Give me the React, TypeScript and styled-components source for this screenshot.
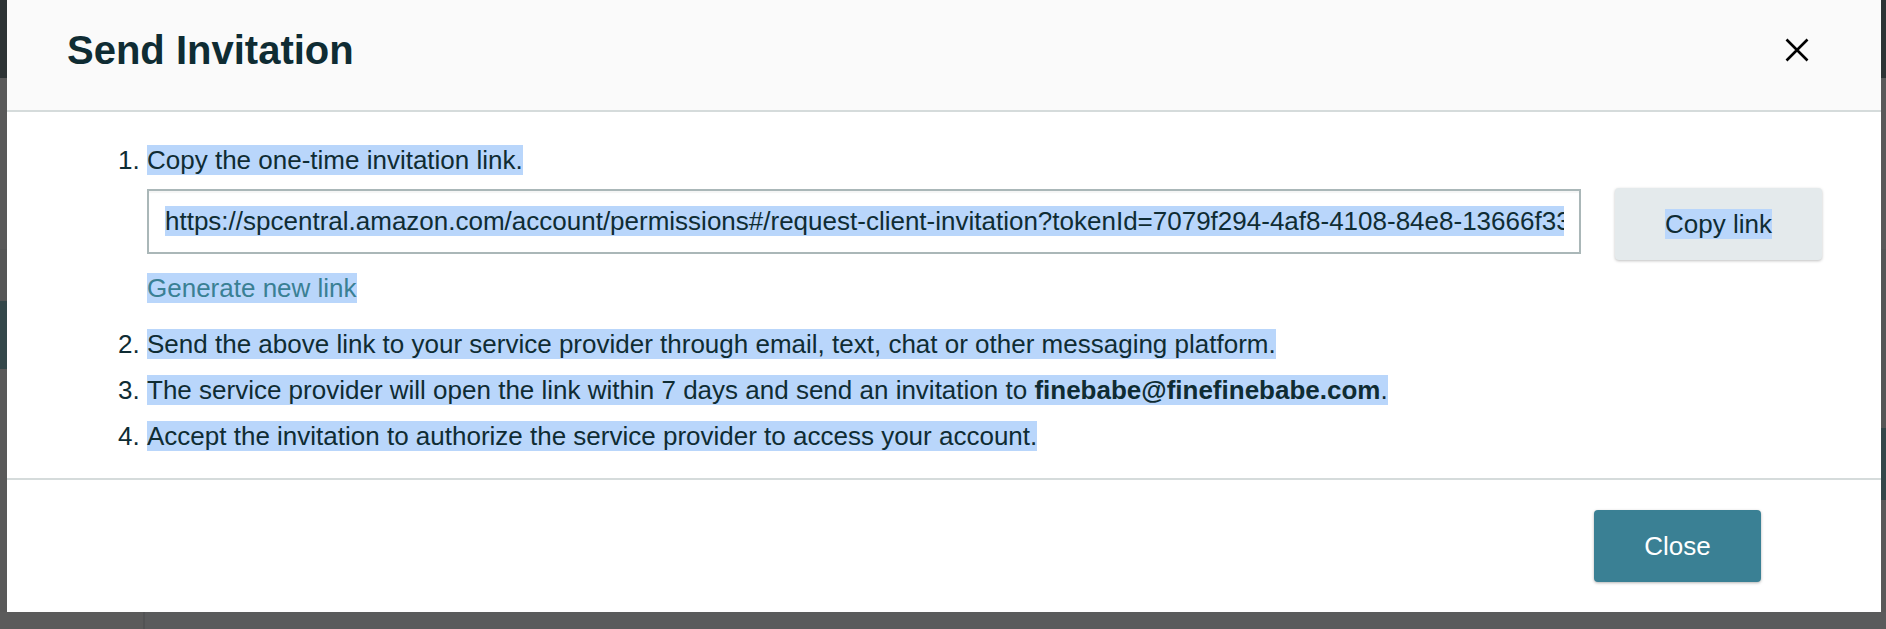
import React from 'react';
import styled, { createGlobalStyle } from 'styled-components';

const colors = {
  ink: '#0f2c33',
  teal: '#3a8094',
  divider: '#d5dbdb',
  selection: '#b9d6fb',
  inputBorder: '#aab7b8',
  secondaryBg: '#e4eaec',
};

const GlobalStyle = createGlobalStyle`
  html, body {
    margin: 0;
    padding: 0;
    background: #5a5b5c;
  }
  body {
    font-family: 'Liberation Sans', Arial, sans-serif;
    color: ${colors.ink};
  }
  * {
    box-sizing: border-box;
  }
`;

const Page = styled.div`
  width: 1886px;
  height: 629px;
  display: flex;
  flex-direction: column;
  overflow: hidden;
`;

const Stage = styled.div`
  display: flex;
  height: 612px;
`;

const Edge = styled.div<{ side: 'left' | 'right' }>`
  width: ${({ side }) => (side === 'left' ? '7px' : '5px')};
  flex-shrink: 0;
  background: ${({ side }) =>
    side === 'left'
      ? 'linear-gradient(#2d3334 0 78px, #595959 78px 249px, #555656 249px 301px, #34474a 301px 369px, #595959 369px)'
      : 'linear-gradient(#2d3334 0 78px, #595959 78px 249px, #555656 249px 428px, #34474a 428px 500px, #595959 500px)'};
`;

const BottomStrip = styled.div`
  flex: 1;
  display: grid;
  grid-template-columns: 145px 1fr;
  background: #5a5b5c;

  & > div:first-child {
    border-right: 2px solid #525354;
    background: #5b5b5b;
  }
`;

const Modal = styled.div`
  flex: 1;
  min-width: 0;
  display: flex;
  flex-direction: column;
  background: #ffffff;
`;

const Header = styled.div`
  height: 112px;
  flex-shrink: 0;
  display: flex;
  align-items: center;
  justify-content: space-between;
  padding: 0 72px 10px 60px;
  background: #fafafa;
  border-bottom: 2px solid ${colors.divider};
`;

const Title = styled.h2`
  margin: 0;
  font-size: 40px;
  font-weight: 700;
  line-height: 1;
  color: ${colors.ink};
`;

const DismissButton = styled.button`
  width: 24px;
  height: 24px;
  padding: 0;
  border: none;
  background: none;
  cursor: pointer;
  display: flex;
`;

const Body = styled.div`
  flex: 1;
  min-width: 0;
  padding: 30px 59px 12px 140px;
  border-bottom: 2px solid ${colors.divider};
`;

const Steps = styled.ol`
  margin: 0;
  padding: 0;
  list-style: decimal outside;
  font-size: 26px;
  line-height: 36px;
`;

const Step = styled.li`
  margin-bottom: 10px;

  &:last-child {
    margin-bottom: 0;
  }
`;

const Selected = styled.span`
  background: ${colors.selection};
`;

const LinkRow = styled.div`
  display: flex;
  align-items: flex-start;
  gap: 34px;
  margin-top: 10px;
`;

const LinkField = styled.div`
  flex: 1;
  min-width: 0;
  height: 65px;
  margin-top: 1px;
  display: flex;
  align-items: center;
  padding: 0 15px 0 16px;
  border: 2px solid ${colors.inputBorder};
  box-shadow: inset 0 2px 1px rgba(0, 0, 0, 0.04);
  background: #ffffff;
`;

const LinkText = styled.div`
  flex: 1;
  min-width: 0;
  overflow: hidden;
  white-space: nowrap;
  line-height: 31px;
`;

const SecondaryButton = styled.button`
  width: 207px;
  height: 72px;
  flex-shrink: 0;
  border: none;
  border-radius: 4px;
  background: ${colors.secondaryBg};
  box-shadow: 0 1px 3px rgba(0, 0, 0, 0.25);
  font-family: inherit;
  font-size: 26px;
  line-height: 36px;
  color: ${colors.ink};
  cursor: pointer;
`;

const TextLink = styled.a`
  display: block;
  margin: 10px 0 20px;
  color: ${colors.teal};
  text-decoration: none;
  cursor: pointer;
`;

const Footer = styled.div`
  display: flex;
  flex-shrink: 0;
  justify-content: flex-end;
  padding: 30px 120px 30px 0;
`;

const PrimaryButton = styled.button`
  width: 167px;
  height: 72px;
  border: none;
  border-radius: 4px;
  background: ${colors.teal};
  box-shadow: 0 1px 3px rgba(0, 0, 0, 0.3);
  font-family: inherit;
  font-size: 26px;
  color: #ffffff;
  cursor: pointer;
`;

const invitationLink =
  'https://spcentral.amazon.com/account/permissions#/request-client-invitation?tokenId=7079f294-4af8-4108-84e8-13666f33a0c1d';

export default function App() {
  return (
    <>
      <GlobalStyle />
      <Page>
        <Stage>
          <Edge side="left" />
          <Modal>
            <Header>
              <Title>Send Invitation</Title>
              <DismissButton aria-label="Close">
                <svg width="24" height="24" viewBox="0 0 24 24">
                  <path d="M1.5 1.5 22.5 22.5M22.5 1.5 1.5 22.5" stroke="#000" strokeWidth="2.6" fill="none" />
                </svg>
              </DismissButton>
            </Header>
            <Body>
              <Steps>
                <Step>
                  <Selected>Copy the one-time invitation link.</Selected>
                  <LinkRow>
                    <LinkField>
                      <LinkText>
                        <Selected>{invitationLink}</Selected>
                      </LinkText>
                    </LinkField>
                    <SecondaryButton>
                      <Selected>Copy link</Selected>
                    </SecondaryButton>
                  </LinkRow>
                  <TextLink>
                    <Selected>Generate new link</Selected>
                  </TextLink>
                </Step>
                <Step>
                  <Selected>Send the above link to your service provider through email, text, chat or other messaging platform.</Selected>
                </Step>
                <Step>
                  <Selected>
                    The service provider will open the link within 7 days and send an invitation to{' '}
                    <b>finebabe@finefinebabe.com</b>.
                  </Selected>
                </Step>
                <Step>
                  <Selected>Accept the invitation to authorize the service provider to access your account.</Selected>
                </Step>
              </Steps>
            </Body>
            <Footer>
              <PrimaryButton>Close</PrimaryButton>
            </Footer>
          </Modal>
          <Edge side="right" />
        </Stage>
        <BottomStrip>
          <div />
          <div />
        </BottomStrip>
      </Page>
    </>
  );
}
